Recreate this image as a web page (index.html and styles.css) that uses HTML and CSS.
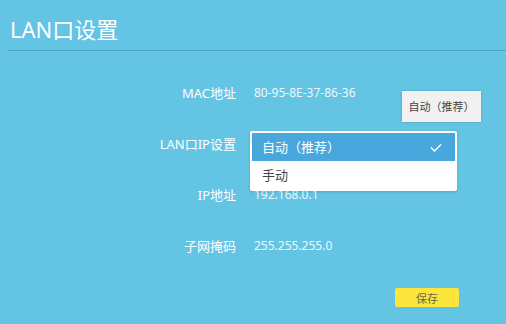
FILE: index.html
```html
<!DOCTYPE html>
<html lang="zh-CN">
<head>
    <meta charset="UTF-8">
    <meta name="viewport" content="width=device-width, initial-scale=1.0">
    <title>LAN口设置</title>
    <link rel="stylesheet" href="styles.css">
</head>
<body>
    <div class="page-head">
        <h1>LAN口设置</h1>
    </div>

    <div class="form">
        <div class="row">
            <span class="label">MAC地址</span>
            <span class="value">80-95-8E-37-86-36</span>
        </div>
        <div class="row">
            <span class="label">LAN口IP设置</span>
            <div class="select">
                <ul class="options">
                    <li class="selected">自动（推荐）
                        <svg class="check" width="12" height="9" viewBox="0 0 12 9">
                            <path d="M1 4.5 L4.5 8 L11 1.5" fill="none" stroke="#fff" stroke-width="1.4"/>
                        </svg>
                    </li>
                    <li>手动</li>
                </ul>
            </div>
        </div>
        <div class="row">
            <span class="label">IP地址</span>
            <span class="value">192.168.0.1</span>
        </div>
        <div class="row">
            <span class="label">子网掩码</span>
            <span class="value">255.255.255.0</span>
        </div>
    </div>

    <div class="actions">
        <button class="btn-save">保存</button>
    </div>

    <div class="tip">自动（推荐）</div>
</body>
</html>
```

FILE: styles.css
```css
body {
    margin: 0;
    background-color: #63c4e4;
    font-family: "Noto Sans", "Noto Sans CJK SC", sans-serif;
    color: #fff;
    position: relative;
    height: 324px;
    overflow: hidden;
}

.page-head {
    margin-left: 8px;
    height: 50px;
    border-bottom: 1px solid #4aa3d2;
}

.page-head h1 {
    margin: 0;
    padding: 14px 0 0 2px;
    font-size: 22px;
    font-weight: normal;
    line-height: 30px;
}

.form {
    padding-top: 16px;
}

.row {
    display: flex;
    align-items: center;
    height: 51px;
}

.label {
    width: 236px;
    text-align: right;
    font-size: 13px;
}

.value {
    margin-left: 18px;
    font-size: 12px;
    color: #eef8fc;
}

.select {
    position: relative;
    margin-left: 14px;
    height: 20px;
}

.options {
    position: absolute;
    top: -3px;
    left: 0;
    width: 203px;
    margin: 0;
    padding: 2px;
    list-style: none;
    background-color: #fff;
    border-radius: 2px;
    box-shadow: 0 1px 3px rgba(0, 0, 0, 0.15);
    z-index: 2;
}

.options li {
    position: relative;
    height: 28px;
    line-height: 28px;
    padding-left: 10px;
    font-size: 13px;
    color: #444;
}

.options li.selected {
    background-color: #48a7dc;
    color: #fff;
}

.check {
    position: absolute;
    right: 13px;
    top: 10px;
}

.actions {
    display: flex;
    justify-content: flex-end;
    padding: 17px 47px 0 0;
}

.btn-save {
    width: 64px;
    height: 19px;
    padding: 0;
    border: none;
    border-radius: 2px;
    background-color: #fbe43b;
    color: #6b6a4a;
    font-family: inherit;
    font-size: 11px;
}

.tip {
    position: absolute;
    top: 91px;
    left: 402px;
    width: 79px;
    height: 31px;
    line-height: 31px;
    text-align: center;
    background-color: #f1f1f1;
    color: #444;
    font-size: 11px;
    box-shadow: 0 0 2px rgba(0, 0, 0, 0.2);
}
```
